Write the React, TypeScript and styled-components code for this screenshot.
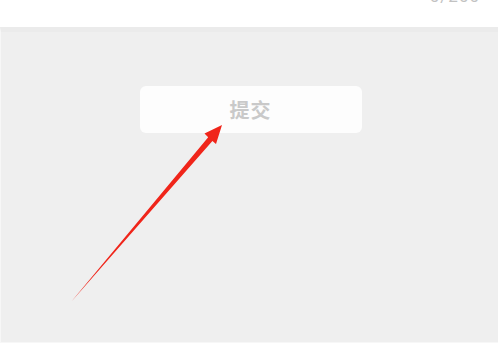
import React from "react";
import styled, { createGlobalStyle } from "styled-components";

const Global = createGlobalStyle`
  html, body { margin: 0; padding: 0; background: #ffffff; }
  body { width: 498px; height: 343px; overflow: hidden; font-family: "Noto Sans CJK SC", "Noto Sans", sans-serif; }
`;

const Page = styled.div`
  position: relative;
  width: 498px;
  height: 343px;
  display: flex;
  flex-direction: column;
  overflow: hidden;
`;

const Header = styled.div`
  height: 27px;
  background: #ffffff;
  display: flex;
  justify-content: flex-end;
  overflow: hidden;
`;

const Counter = styled.span`
  font-family: "Roboto", "Noto Sans", sans-serif;
  font-size: 17px;
  line-height: 17px;
  color: #c2c2c2;
  margin-top: -12px;
  margin-right: 18px;
  letter-spacing: 1px;
`;

const Body = styled.div`
  flex: 1;
  background: #efefef;
  border-top: 5px solid #ebebeb;
  border-left: 1px solid #f7f7f7;
  border-bottom: 1px solid #f7f7f7;
  display: flex;
  justify-content: center;
  padding-top: 54px;
  padding-left: 2px;
`;

const SubmitButton = styled.button`
  width: 222px;
  height: 47px;
  border: none;
  border-radius: 6px;
  background: #fdfdfd;
  color: #c9c9c9;
  font-family: "Noto Sans CJK SC", sans-serif;
  font-size: 20px;
  font-weight: 700;
  letter-spacing: 1px;
  padding: 0;
`;

const ArrowLayer = styled.svg`
  position: absolute;
  left: 0;
  top: 0;
  pointer-events: none;
`;

export default function App() {
  return (
    <Page>
      <Global />
      <Header>
        <Counter>0/200</Counter>
      </Header>
      <Body>
        <SubmitButton>提交</SubmitButton>
      </Body>
      <ArrowLayer width="498" height="343" viewBox="0 0 498 343">
        <polygon
          points="71,302 212.4,141 216,144 222,125 204.5,133.5 208.2,137.2"
          fill="#f0251a"
        />
      </ArrowLayer>
    </Page>
  );
}
